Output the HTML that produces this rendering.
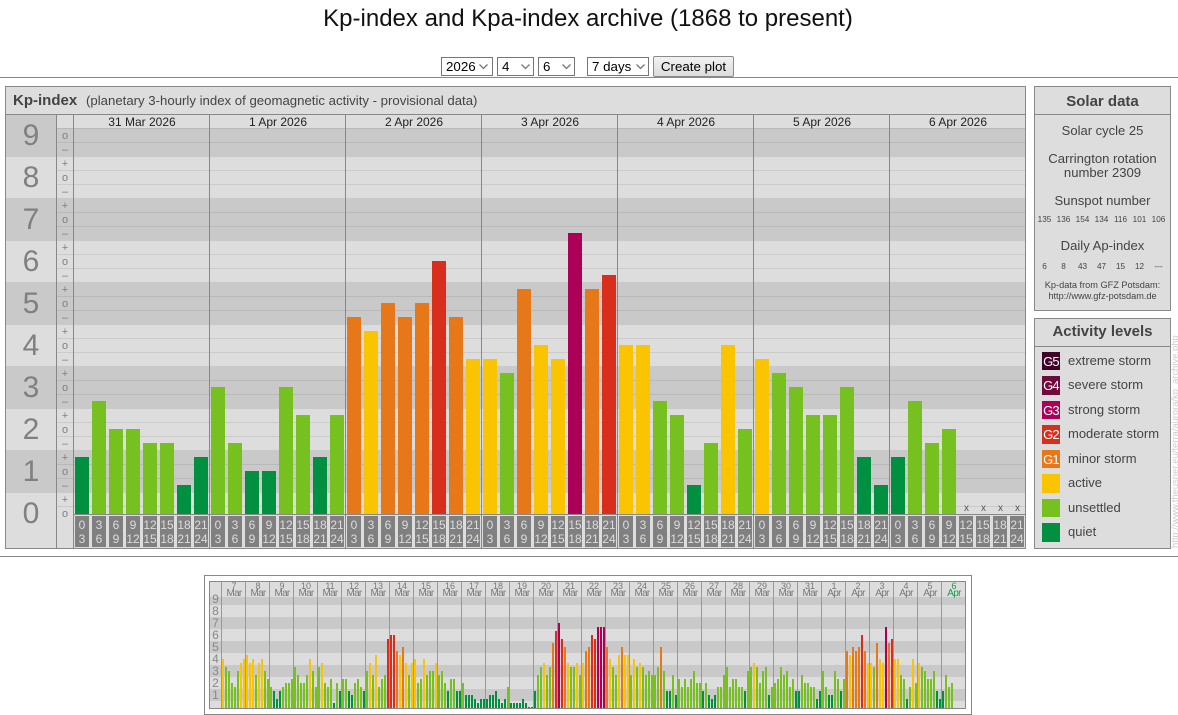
<!DOCTYPE html>
<html><head><meta charset="utf-8"><title>Kp-index archive</title>
<style>
html,body{margin:0;padding:0;background:#fff;width:1178px;height:715px;overflow:hidden;font-family:"Liberation Sans",sans-serif}
.a{position:absolute}
svg{position:absolute;left:0;top:0}
select{position:absolute;font:13.33px "Liberation Sans",sans-serif;height:19px;top:57px;background:#fff;border:1px solid #767676;border-radius:0;padding:0 0 0 4px;color:#000;appearance:none;-webkit-appearance:none;box-sizing:border-box}
button{position:absolute;left:653px;top:56px;width:81px;height:21px;font:13.33px "Liberation Sans",sans-serif;background:linear-gradient(#f2f2f2,#dcdcdc);border:1px solid #8a8a8a;border-radius:2px;padding:0;color:#000}
.bars{position:absolute;display:flex;align-items:flex-end}
.bars i{display:block;flex:none;height:calc(var(--k)*var(--u) + 1px)}
.m{left:75px;top:114px;height:400px;gap:3px;--u:14px}
.m i{width:14px}
.s{left:222px;top:597px;height:111px;gap:1px;--u:4px}
.s i{width:2px}
.k0{--k:0;background:#009040}.k1{--k:1;background:#009040}.k2{--k:2;background:#009040}.k3{--k:3;background:#009040}.k4{--k:4;background:#009040}
.k5{--k:5;background:#76c11f}.k6{--k:6;background:#76c11f}.k7{--k:7;background:#76c11f}.k8{--k:8;background:#76c11f}.k9{--k:9;background:#76c11f}.k10{--k:10;background:#76c11f}
.k11{--k:11;background:#fac400}.k12{--k:12;background:#fac400}.k13{--k:13;background:#fac400}
.k14{--k:14;background:#e6781a}.k15{--k:15;background:#e6781a}.k16{--k:16;background:#e6781a}
.k17{--k:17;background:#d92e1c}.k18{--k:18;background:#d92e1c}.k19{--k:19;background:#d92e1c}
.k20{--k:20;background:#ac0058}.k21{--k:21;background:#ac0058}
.num{left:6px;top:115px;width:50px;text-align:center;font-size:30px;line-height:42px;color:#808080}
.sign{left:57px;top:129px;width:16px;text-align:center;font-size:11px;line-height:14px;color:#808080}
.dates{left:74px;top:116px;display:flex;font-size:12px;line-height:13px;color:#222}
.dates div{width:136px;text-align:center}
.ticks{left:75px;top:516px;display:flex;gap:3px}
.ticks b{display:block;width:14px;height:31px;background:#808080;color:#ddd;font:12px/14px "Liberation Sans",sans-serif;text-align:center;padding-top:2px;box-sizing:border-box;white-space:nowrap}
.xs{left:958px;top:503px;display:flex;font-size:10px;line-height:12px;color:#555}
.xs span{width:17px;text-align:center}
.c{text-align:center;color:#444}
.row{display:flex;font-size:8.2px;line-height:11px;color:#444;left:1035px;width:135px}
.row span{width:19px;text-align:center;flex:none}
.g{position:absolute;left:1042px;width:18px;color:#fff;font-size:13px;letter-spacing:-.8px;text-align:center;overflow:hidden}
.l{position:absolute;left:1068px;font-size:13px;line-height:16px;color:#444;white-space:nowrap}
.mh{left:222px;top:581px;display:flex}
.mh div{width:24px;text-align:center;font-size:9px;line-height:8px;color:#777;padding-top:1px}
.mh span{display:block;font-size:10px;line-height:8px;letter-spacing:-.7px;padding-top:0}
.mn{left:210px;top:593px;width:11px;text-align:center;font-size:12px;line-height:12px;color:#888}
</style></head><body>

<svg width="1178" height="715" shape-rendering="crispEdges">
<rect x="0" y="77" width="1178" height="1" fill="#888"/>
<rect x="0" y="556" width="1178" height="1" fill="#888"/>
<!-- main panel -->
<rect x="5.5" y="86.5" width="1020" height="462" fill="#ddd" stroke="#888"/>
<g fill="#c9c9c9">
<rect x="6" y="115" width="50" height="42"/><rect x="57" y="128" width="968" height="29"/>
<rect x="6" y="198" width="1019" height="43"/>
<rect x="6" y="282" width="1019" height="43"/>
<rect x="6" y="366" width="1019" height="43"/>
<rect x="6" y="450" width="1019" height="43"/>
</g>
<path d="M57 128.5H1025M57 142.5H1025M57 212.5H1025M57 226.5H1025M57 296.5H1025M57 310.5H1025M57 380.5H1025M57 394.5H1025M57 464.5H1025M57 478.5H1025" stroke="#b9b9b9" fill="none"/>
<path d="M57 170.5H1025M57 184.5H1025M57 254.5H1025M57 268.5H1025M57 338.5H1025M57 352.5H1025M57 422.5H1025M57 436.5H1025M57 506.5H1025" stroke="#cbcbcb" fill="none"/>
<path d="M5 114.5H1025M73 514.5H1025" stroke="#888" fill="none"/>
<path d="M56.5 114V548M73.5 114V548M209.5 114V548M345.5 114V548M481.5 114V548M617.5 114V548M753.5 114V548M889.5 114V548" stroke="#888" fill="none"/>
<!-- solar -->
<rect x="1034.5" y="86.5" width="136" height="224" fill="#ddd" stroke="#888"/>
<path d="M1034 114.5H1171" stroke="#888"/>
<!-- activity -->
<rect x="1034.5" y="318.5" width="136" height="230" fill="#ddd" stroke="#888"/>
<path d="M1034 346.5H1171" stroke="#888"/>
<!-- mini -->
<rect x="204.5" y="575.5" width="767" height="139" fill="#fff" stroke="#888"/>
<rect x="209.5" y="581.5" width="756" height="127" fill="#ddd" stroke="#888"/>
<g fill="#c9c9c9">
<rect x="210" y="597" width="755" height="8"/>
<rect x="210" y="617" width="755" height="12"/>
<rect x="210" y="641" width="755" height="12"/>
<rect x="210" y="665" width="755" height="12"/>
<rect x="210" y="689" width="755" height="12"/>
</g>
<path d="M221.5 581V708M245.5 581V708M269.5 581V708M293.5 581V708M317.5 581V708M341.5 581V708M365.5 581V708M389.5 581V708M413.5 581V708M437.5 581V708M461.5 581V708M485.5 581V708M509.5 581V708M533.5 581V708M557.5 581V708M581.5 581V708M605.5 581V708M629.5 581V708M653.5 581V708M677.5 581V708M701.5 581V708M725.5 581V708M749.5 581V708M773.5 581V708M797.5 581V708M821.5 581V708M845.5 581V708M869.5 581V708M893.5 581V708M917.5 581V708M941.5 581V708" stroke="#999" fill="none"/>
<text transform="translate(1178,548) rotate(-90)" font-family="Liberation Sans" font-size="9.4" fill="#ccc" shape-rendering="auto">http://www.theusner.eu/terra/aurora/kp_archive.php</text>
</svg>

<div class="a" style="left:0;top:4px;width:1176px;text-align:center;font-size:24px;line-height:30px;color:#111">Kp-index and Kpa-index archive (1868 to present)</div>

<select style="left:441px;width:52px"><option>2026</option></select>
<select style="left:497px;width:37px"><option>4</option></select>
<select style="left:538px;width:37px"><option>6</option></select>
<select style="left:587px;width:62px"><option>7 days</option></select>
<svg width="1178" height="80" style="pointer-events:none"><path d="M479.5 64.5l4 4 4-4M521.5 64.5l4 4 4-4M562.5 64.5l4 4 4-4M636.5 64.5l4 4 4-4" fill="none" stroke="#777" stroke-width="1.3"/></svg>
<button>Create plot</button>

<div class="a" style="left:13px;top:93px;font-size:15px;font-weight:bold;line-height:16px;color:#444;white-space:nowrap">Kp-index</div>
<div class="a" style="left:86px;top:93px;font-size:13.2px;line-height:15px;color:#444;white-space:nowrap">(planetary 3-hourly index of geomagnetic activity - provisional data)</div>

<div class="a num">9<br>8<br>7<br>6<br>5<br>4<br>3<br>2<br>1<br>0</div>
<div class="a sign">o<br>–<br>+<br>o<br>–<br>+<br>o<br>–<br>+<br>o<br>–<br>+<br>o<br>–<br>+<br>o<br>–<br>+<br>o<br>–<br>+<br>o<br>–<br>+<br>o<br>–<br>+<br>o</div>
<div class="a dates"><div>31 Mar 2026</div><div>1 Apr 2026</div><div>2 Apr 2026</div><div>3 Apr 2026</div><div>4 Apr 2026</div><div>5 Apr 2026</div><div>6 Apr 2026</div></div>

<div class="bars m"><i class=k4></i><i class=k8></i><i class=k6></i><i class=k6></i><i class=k5></i><i class=k5></i><i class=k2></i><i class=k4></i><i class=k9></i><i class=k5></i><i class=k3></i><i class=k3></i><i class=k9></i><i class=k7></i><i class=k4></i><i class=k7></i><i class=k14></i><i class=k13></i><i class=k15></i><i class=k14></i><i class=k15></i><i class=k18></i><i class=k14></i><i class=k11></i><i class=k11></i><i class=k10></i><i class=k16></i><i class=k12></i><i class=k11></i><i class=k20></i><i class=k16></i><i class=k17></i><i class=k12></i><i class=k12></i><i class=k8></i><i class=k7></i><i class=k2></i><i class=k5></i><i class=k12></i><i class=k6></i><i class=k11></i><i class=k10></i><i class=k9></i><i class=k7></i><i class=k7></i><i class=k9></i><i class=k4></i><i class=k2></i><i class=k4></i><i class=k8></i><i class=k5></i><i class=k6></i></div>

<div class="a xs"><span>x</span><span>x</span><span>x</span><span>x</span></div>

<div class="a ticks"><b>0<br>3</b><b>3<br>6</b><b>6<br>9</b><b>9<br>12</b><b>12<br>15</b><b>15<br>18</b><b>18<br>21</b><b>21<br>24</b><b>0<br>3</b><b>3<br>6</b><b>6<br>9</b><b>9<br>12</b><b>12<br>15</b><b>15<br>18</b><b>18<br>21</b><b>21<br>24</b><b>0<br>3</b><b>3<br>6</b><b>6<br>9</b><b>9<br>12</b><b>12<br>15</b><b>15<br>18</b><b>18<br>21</b><b>21<br>24</b><b>0<br>3</b><b>3<br>6</b><b>6<br>9</b><b>9<br>12</b><b>12<br>15</b><b>15<br>18</b><b>18<br>21</b><b>21<br>24</b><b>0<br>3</b><b>3<br>6</b><b>6<br>9</b><b>9<br>12</b><b>12<br>15</b><b>15<br>18</b><b>18<br>21</b><b>21<br>24</b><b>0<br>3</b><b>3<br>6</b><b>6<br>9</b><b>9<br>12</b><b>12<br>15</b><b>15<br>18</b><b>18<br>21</b><b>21<br>24</b><b>0<br>3</b><b>3<br>6</b><b>6<br>9</b><b>9<br>12</b><b>12<br>15</b><b>15<br>18</b><b>18<br>21</b><b>21<br>24</b></div>

<!-- solar data -->
<div class="a c" style="left:1035px;width:135px;top:93px;font-size:15px;font-weight:bold;line-height:18px">Solar data</div>
<div class="a c" style="left:1035px;width:135px;top:123px;font-size:13px;line-height:15px">Solar cycle 25</div>
<div class="a c" style="left:1035px;width:135px;top:152px;font-size:13.1px;line-height:14px">Carrington rotation<br>number 2309</div>
<div class="a c" style="left:1035px;width:135px;top:193px;font-size:13.1px;line-height:15px">Sunspot number</div>
<div class="a row" style="top:214px"><span>135</span><span>136</span><span>154</span><span>134</span><span>116</span><span>101</span><span>106</span></div>
<div class="a c" style="left:1035px;width:135px;top:238px;font-size:13.1px;line-height:15px">Daily Ap-index</div>
<div class="a row" style="top:261px"><span>6</span><span>8</span><span>43</span><span>47</span><span>15</span><span>12</span><span>---</span></div>
<div class="a c" style="left:1035px;width:135px;top:280px;font-size:9.2px;line-height:11px">Kp-data from GFZ Potsdam:<br>http://www.gfz-potsdam.de</div>

<!-- activity -->
<div class="a c" style="left:1035px;width:135px;top:323px;font-size:15px;font-weight:bold;line-height:18px">Activity levels</div>
<div class="g" style="top:352px;height:18px;line-height:19px;background:#3f0328">G5</div><div class="l" style="top:353px">extreme storm</div>
<div class="g" style="top:376px;height:19px;line-height:20px;background:#6e0a3c">G4</div><div class="l" style="top:377px">severe storm</div>
<div class="g" style="top:401px;height:18px;line-height:19px;background:#ac0058">G3</div><div class="l" style="top:402px">strong storm</div>
<div class="g" style="top:425px;height:19px;line-height:20px;background:#d92e1c">G2</div><div class="l" style="top:426px">moderate storm</div>
<div class="g" style="top:450px;height:18px;line-height:19px;background:#e6781a">G1</div><div class="l" style="top:451px">minor storm</div>
<div class="g" style="top:474px;height:19px;background:#fac400"></div><div class="l" style="top:475px">active</div>
<div class="g" style="top:499px;height:18px;background:#76c11f"></div><div class="l" style="top:500px">unsettled</div>
<div class="g" style="top:523px;height:19px;background:#009040"></div><div class="l" style="top:524px">quiet</div>

<!-- mini chart -->
<div class="a mn">9<br>8<br>7<br>6<br>5<br>4<br>3<br>2<br>1</div>
<div class="a mh"><div>7<span>Mar</span></div><div>8<span>Mar</span></div><div>9<span>Mar</span></div><div>10<span>Mar</span></div><div>11<span>Mar</span></div><div>12<span>Mar</span></div><div>13<span>Mar</span></div><div>14<span>Mar</span></div><div>15<span>Mar</span></div><div>16<span>Mar</span></div><div>17<span>Mar</span></div><div>18<span>Mar</span></div><div>19<span>Mar</span></div><div>20<span>Mar</span></div><div>21<span>Mar</span></div><div>22<span>Mar</span></div><div>23<span>Mar</span></div><div>24<span>Mar</span></div><div>25<span>Mar</span></div><div>26<span>Mar</span></div><div>27<span>Mar</span></div><div>28<span>Mar</span></div><div>29<span>Mar</span></div><div>30<span>Mar</span></div><div>31<span>Mar</span></div><div>1<span>Apr</span></div><div>2<span>Apr</span></div><div>3<span>Apr</span></div><div>4<span>Apr</span></div><div>5<span>Apr</span></div><div style="color:#1a9a50">6<span>Apr</span></div></div>

<div class="bars s">
<i class=k12></i><i class=k10></i><i class=k9></i><i class=k6></i><i class=k5></i><i class=k9></i><i class=k11></i><i class=k12></i>
<i class=k13></i><i class=k11></i><i class=k12></i><i class=k8></i><i class=k11></i><i class=k12></i><i class=k9></i><i class=k7></i>
<i class=k5></i><i class=k4></i><i class=k2></i><i class=k4></i><i class=k5></i><i class=k6></i><i class=k6></i><i class=k7></i>
<i class=k10></i><i class=k8></i><i class=k6></i><i class=k6></i><i class=k8></i><i class=k12></i><i class=k9></i><i class=k5></i>
<i class=k10></i><i class=k11></i><i class=k6></i><i class=k5></i><i class=k7></i><i class=k1></i><i class=k6></i><i class=k4></i>
<i class=k7></i><i class=k7></i><i class=k4></i><i class=k3></i><i class=k6></i><i class=k7></i><i class=k5></i><i class=k4></i>
<i class=k9></i><i class=k11></i><i class=k8></i><i class=k13></i><i class=k5></i><i class=k7></i><i class=k8></i><i class=k17></i>
<i class=k18></i><i class=k18></i><i class=k14></i><i class=k13></i><i class=k15></i><i class=k11></i><i class=k8></i><i class=k11></i>
<i class=k12></i><i class=k6></i><i class=k7></i><i class=k12></i><i class=k8></i><i class=k9></i><i class=k9></i><i class=k11></i>
<i class=k8></i><i class=k9></i><i class=k6></i><i class=k4></i><i class=k7></i><i class=k7></i><i class=k4></i><i class=k4></i>
<i class=k6></i><i class=k3></i><i class=k3></i><i class=k3></i><i class=k2></i><i class=k1></i><i class=k2></i><i class=k2></i>
<i class=k2></i><i class=k3></i><i class=k3></i><i class=k4></i><i class=k2></i><i class=k1></i><i class=k2></i><i class=k5></i>
<i class=k1></i><i class=k1></i><i class=k1></i><i class=k1></i><i class=k2></i><i class=k1></i><i class=k0></i><i class=k0></i>
<i class=k4></i><i class=k8></i><i class=k10></i><i class=k11></i><i class=k8></i><i class=k10></i><i class=k16></i><i class=k19></i>
<i class=k21></i><i class=k17></i><i class=k15></i><i class=k11></i><i class=k10></i><i class=k10></i><i class=k11></i><i class=k8></i>
<i class=k11></i><i class=k14></i><i class=k15></i><i class=k18></i><i class=k17></i><i class=k20></i><i class=k20></i><i class=k20></i>
<i class=k15></i><i class=k12></i><i class=k10></i><i class=k8></i><i class=k13></i><i class=k15></i><i class=k13></i><i class=k13></i>
<i class=k8></i><i class=k12></i><i class=k10></i><i class=k11></i><i class=k10></i><i class=k8></i><i class=k9></i><i class=k8></i>
<i class=k8></i><i class=k10></i><i class=k15></i><i class=k9></i><i class=k4></i><i class=k4></i><i class=k8></i><i class=k3></i>
<i class=k7></i><i class=k5></i><i class=k7></i><i class=k5></i><i class=k7></i><i class=k9></i><i class=k6></i><i class=k6></i>
<i class=k4></i><i class=k6></i><i class=k3></i><i class=k2></i><i class=k3></i><i class=k5></i><i class=k5></i><i class=k8></i>
<i class=k10></i><i class=k5></i><i class=k7></i><i class=k7></i><i class=k5></i><i class=k5></i><i class=k4></i><i class=k9></i>
<i class=k10></i><i class=k11></i><i class=k10></i><i class=k6></i><i class=k9></i><i class=k10></i><i class=k3></i><i class=k5></i>
<i class=k6></i><i class=k7></i><i class=k10></i><i class=k8></i><i class=k9></i><i class=k5></i><i class=k7></i><i class=k4></i>
<i class=k4></i><i class=k8></i><i class=k6></i><i class=k6></i><i class=k5></i><i class=k5></i><i class=k2></i><i class=k4></i>
<i class=k9></i><i class=k5></i><i class=k3></i><i class=k3></i><i class=k9></i><i class=k7></i><i class=k4></i><i class=k7></i>
<i class=k14></i><i class=k13></i><i class=k15></i><i class=k14></i><i class=k15></i><i class=k18></i><i class=k14></i><i class=k11></i>
<i class=k11></i><i class=k10></i><i class=k16></i><i class=k12></i><i class=k11></i><i class=k20></i><i class=k16></i><i class=k17></i>
<i class=k12></i><i class=k12></i><i class=k8></i><i class=k7></i><i class=k2></i><i class=k5></i><i class=k12></i><i class=k6></i>
<i class=k11></i><i class=k10></i><i class=k9></i><i class=k7></i><i class=k7></i><i class=k9></i><i class=k4></i><i class=k2></i>
<i class=k4></i><i class=k8></i><i class=k5></i><i class=k6></i>
</div>
</body></html>
